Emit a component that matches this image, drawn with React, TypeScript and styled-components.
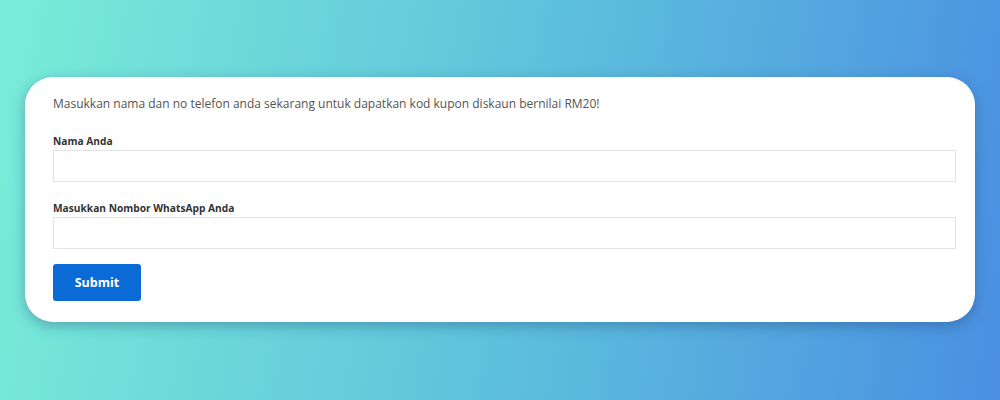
import styled, { createGlobalStyle } from 'styled-components';

const GlobalStyle = createGlobalStyle`
  html, body {
    margin: 0;
    padding: 0;
  }
  body {
    width: 1000px;
    height: 400px;
    overflow: hidden;
    font-family: "Open Sans", "Noto Sans", sans-serif;
    background: linear-gradient(100deg, #79edd8 0%, #5fc3dc 50%, #4a8fe2 100%);
  }
`;

const Page = styled.div`
  width: 1000px;
  height: 400px;
  box-sizing: border-box;
  padding: 77px 25px 0;
`;

const Card = styled.form`
  box-sizing: border-box;
  width: 950px;
  height: 245px;
  background: #fff;
  border-radius: 28px;
  box-shadow: 0 4px 14px hsla(215, 60%, 25%, 0.35);
  padding: 19px 19px 0 28px;
  display: flex;
  flex-direction: column;
`;

const Intro = styled.p`
  margin: 0 0 22px;
  font-size: 12px;
  line-height: 16px;
  color: #545454;
`;

const Field = styled.div`
  display: flex;
  flex-direction: column;
  gap: 2px;
  & + & {
    margin-top: 19px;
  }
`;

const Label = styled.label`
  font-size: 10.2px;
  font-weight: 700;
  line-height: 14px;
  color: #333;
`;

const Input = styled.input`
  box-sizing: border-box;
  width: 100%;
  height: 32px;
  border: 1px solid #e3e3e3;
  background: #fff;
  outline: none;
  padding: 0 8px;
  font: inherit;
`;

const Submit = styled.button`
  align-self: flex-start;
  margin-top: 15px;
  width: 88px;
  height: 37px;
  border: none;
  border-radius: 3px;
  background: #0a6bd7;
  color: #fff;
  font-family: inherit;
  font-size: 12.5px;
  font-weight: 700;
  cursor: pointer;
`;

export default function App() {
  return (
    <>
      <GlobalStyle />
      <Page>
        <Card onSubmit={e => e.preventDefault()}>
          <Intro>Masukkan nama dan no telefon anda sekarang untuk dapatkan kod kupon diskaun bernilai RM20!</Intro>
          <Field>
            <Label htmlFor="nama">Nama Anda</Label>
            <Input id="nama" type="text" />
          </Field>
          <Field>
            <Label htmlFor="whatsapp">Masukkan Nombor WhatsApp Anda</Label>
            <Input id="whatsapp" type="tel" />
          </Field>
          <Submit type="submit">Submit</Submit>
        </Card>
      </Page>
    </>
  );
}
